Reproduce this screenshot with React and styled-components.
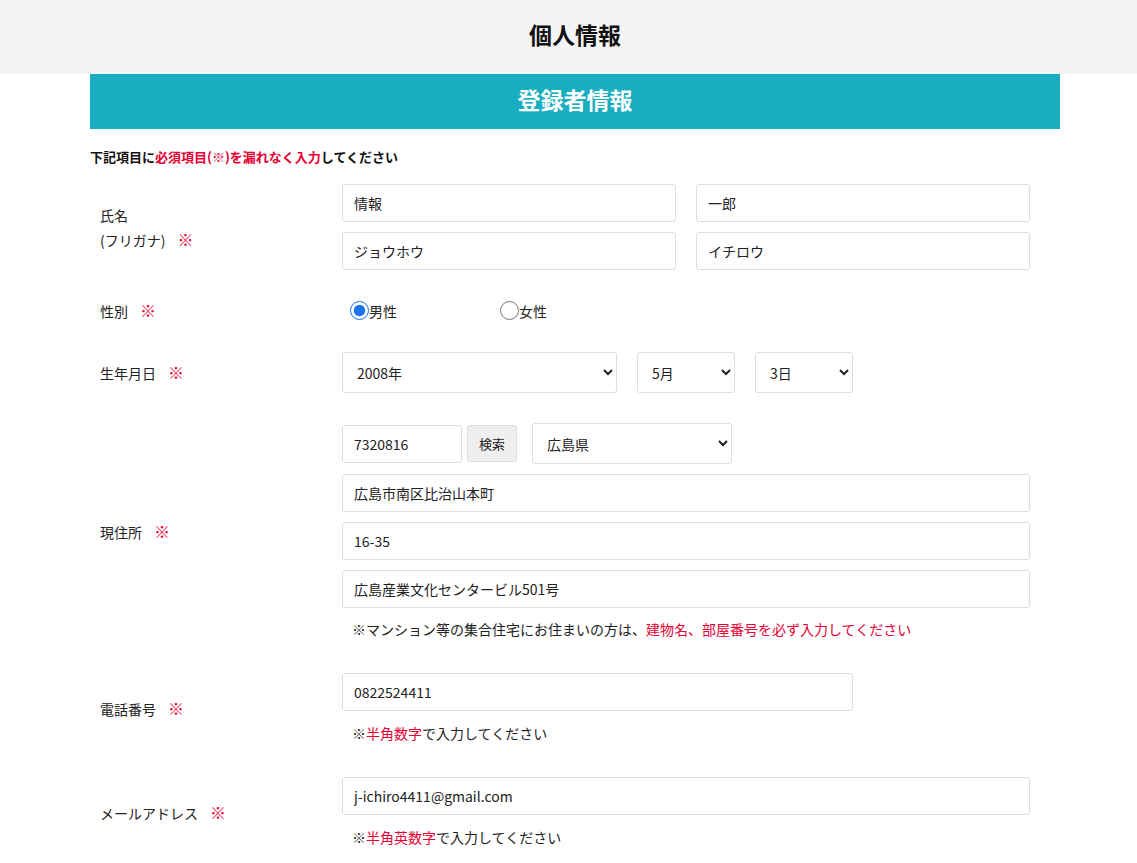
import React from 'react'
import styled, { createGlobalStyle } from 'styled-components'

const Global = createGlobalStyle`
  html, body { overflow: hidden; }
  body {
    margin: 0;
    background: #fff;
    font-family: "Noto Sans CJK JP", "Noto Sans", sans-serif;
    color: #222;
    font-size: 14px;
  }
`

const Page = styled.div`
  width: 1150px;
`

const Header = styled.header`
  height: 68px;
  padding-bottom: 6px;
  background: #f4f4f4;
  display: flex;
  align-items: center;
  justify-content: center;
  font-size: 23px;
  font-weight: 700;
  color: #111;
`

const Main = styled.main`
  width: 970px;
  margin: 0 auto;
`

const Band = styled.div`
  height: 49px;
  padding-bottom: 6px;
  background: #19aebf;
  color: #fff;
  font-size: 23px;
  font-weight: 700;
  display: flex;
  align-items: center;
  justify-content: center;
`

const Notice = styled.p`
  margin: 19px 0 0;
  font-size: 13px;
  font-weight: 700;
  line-height: 18px;
  color: #111;
`

const Red = styled.span`
  color: #e60033;
`

const Row = styled.div`
  display: flex;
  align-items: center;
  margin-top: ${p => p.$mt}px;
`

const Label = styled.div`
  width: 242px;
  padding-left: 10px;
  font-size: 14px;
  line-height: 24px;
`

const Mark = styled.span`
  color: #e60033;
  font-size: 16px;
  margin-left: 12px;
`

const Field = styled.div`
  width: 688px;
  display: flex;
  flex-direction: column;
  gap: ${p => p.$gap || 10}px;
`

const Line = styled.div`
  display: flex;
  align-items: center;
  gap: ${p => p.$gap ?? 20}px;
`

const Input = styled.input`
  box-sizing: border-box;
  height: 38px;
  flex-shrink: 0;
  width: ${p => p.$w ? p.$w + 'px' : '100%'};
  flex-grow: ${p => p.$grow ? 1 : 0};
  flex-basis: ${p => p.$grow ? '0' : 'auto'};
  border: 1px solid #ddd;
  border-radius: 3px;
  padding: 0 11px;
  font: inherit;
  font-size: 14px;
  color: #222;
`

const Select = styled.select`
  box-sizing: border-box;
  height: 41px;
  width: ${p => p.$w}px;
  margin-left: ${p => p.$ml || 0}px;
  border: 1px solid #ddd;
  border-radius: 3px;
  padding: 0 10px;
  font: inherit;
  font-size: 14px;
  color: #222;
  background: #fff;
`

const SearchBtn = styled.button`
  box-sizing: border-box;
  height: 37px;
  width: 50px;
  margin-left: -15px;
  border: 1px solid #ddd;
  border-radius: 3px;
  background: #efefef;
  font: inherit;
  font-size: 13px;
  color: #222;
`

const Radio = styled.label`
  display: flex;
  align-items: center;
  width: 150px;
  font-size: 14px;
  input { margin: 0; width: 19px; height: 19px; accent-color: #1a73e8; }
`

const Note = styled.div`
  padding-left: 10px;
  font-size: 14px;
  line-height: 22px;
`

export default function App() {
  return (
    <Page>
      <Global />
      <Header>個人情報</Header>
      <Main>
        <Band>登録者情報</Band>
        <Notice>下記項目に<Red>必須項目(※)を漏れなく入力</Red>してください</Notice>

        <Row $mt={18}>
          <Label>氏名<br />(フリガナ)<Mark>※</Mark></Label>
          <Field>
            <Line><Input $grow defaultValue="情報" /><Input $grow defaultValue="一郎" /></Line>
            <Line><Input $grow defaultValue="ジョウホウ" /><Input $grow defaultValue="イチロウ" /></Line>
          </Field>
        </Row>

        <Row $mt={28}>
          <Label>性別<Mark>※</Mark></Label>
          <Line $gap={0} style={{ marginLeft: 8 }}>
            <Radio><input type="radio" name="sex" defaultChecked />男性</Radio>
            <Radio><input type="radio" name="sex" />女性</Radio>
          </Line>
        </Row>

        <Row $mt={29}>
          <Label>生年月日<Mark>※</Mark></Label>
          <Line>
            <Select $w={275}><option>2008年</option></Select>
            <Select $w={98}><option>5月</option></Select>
            <Select $w={98}><option>3日</option></Select>
          </Line>
        </Row>

        <Row $mt={30}>
          <Label>現住所<Mark>※</Mark></Label>
          <Field>
            <Line>
              <Input $w={120} defaultValue="7320816" />
              <SearchBtn>検索</SearchBtn>
              <Select $w={200} $ml={-5}><option>　広島県</option></Select>
            </Line>
            <Input defaultValue="広島市南区比治山本町" />
            <Input defaultValue="16-35" />
            <Input defaultValue="広島産業文化センタービル501号" />
            <Note>※マンション等の集合住宅にお住まいの方は、<Red>建物名、部屋番号を必ず入力してください</Red></Note>
          </Field>
        </Row>

        <Row $mt={33}>
          <Label>電話番号<Mark>※</Mark></Label>
          <Field $gap={11}>
            <Input $w={511} defaultValue="0822524411" />
            <Note>※<Red>半角数字</Red>で入力してください</Note>
          </Field>
        </Row>

        <Row $mt={33}>
          <Label>メールアドレス<Mark>※</Mark></Label>
          <Field $gap={11}>
            <Input defaultValue="j-ichiro4411@gmail.com" />
            <Note>※<Red>半角英数字</Red>で入力してください</Note>
          </Field>
        </Row>
      </Main>
    </Page>
  )
}
